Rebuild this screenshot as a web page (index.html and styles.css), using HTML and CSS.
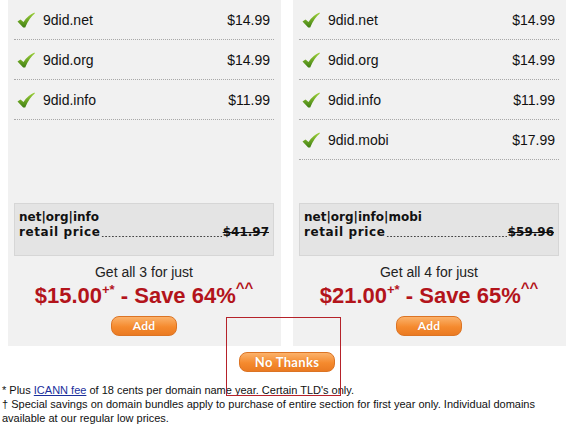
FILE: index.html
```html
<!DOCTYPE html>
<html>
<head>
<meta charset="utf-8">
<link rel="stylesheet" href="styles.css">
</head>
<body>
<div class="page">
  <div class="panels">
    <section class="panel">
      <ul class="rows">
        <li class="row"><svg class="check" viewBox="0 0 18 16"><defs><linearGradient id="g1" x1="0" y1="0" x2="0" y2="1"><stop offset="0" stop-color="#9ed13a"/><stop offset="1" stop-color="#3f7f12"/></linearGradient></defs><path d="M0.5 9.5 L3.5 7.5 L6.5 10 Q10.5 3.5 17.5 0.5 L17.8 1.5 Q12 6 8.2 15.5 L6.2 15.5 Z" fill="url(#g1)"/></svg><span class="name">9did.net</span><span class="price">$14.99</span></li>
        <li class="row"><svg class="check" viewBox="0 0 18 16"><path d="M0.5 9.5 L3.5 7.5 L6.5 10 Q10.5 3.5 17.5 0.5 L17.8 1.5 Q12 6 8.2 15.5 L6.2 15.5 Z" fill="url(#g1)"/></svg><span class="name">9did.org</span><span class="price">$14.99</span></li>
        <li class="row"><svg class="check" viewBox="0 0 18 16"><path d="M0.5 9.5 L3.5 7.5 L6.5 10 Q10.5 3.5 17.5 0.5 L17.8 1.5 Q12 6 8.2 15.5 L6.2 15.5 Z" fill="url(#g1)"/></svg><span class="name">9did.info</span><span class="price">$11.99</span></li>
      </ul>
      <div class="retail">
        <div class="tlds">net|org|info</div>
        <div class="retail-line"><span class="label">retail price</span><span class="leader"></span><s>$41.97</s></div>
      </div>
      <p class="get">Get all 3 for just</p>
      <p class="deal">$15.00<sup>+*</sup> - Save 64%<sup class="hat">^^</sup></p>
      <button class="btn add">Add</button>
    </section>
    <section class="panel">
      <ul class="rows">
        <li class="row"><svg class="check" viewBox="0 0 18 16"><path d="M0.5 9.5 L3.5 7.5 L6.5 10 Q10.5 3.5 17.5 0.5 L17.8 1.5 Q12 6 8.2 15.5 L6.2 15.5 Z" fill="url(#g1)"/></svg><span class="name">9did.net</span><span class="price">$14.99</span></li>
        <li class="row"><svg class="check" viewBox="0 0 18 16"><path d="M0.5 9.5 L3.5 7.5 L6.5 10 Q10.5 3.5 17.5 0.5 L17.8 1.5 Q12 6 8.2 15.5 L6.2 15.5 Z" fill="url(#g1)"/></svg><span class="name">9did.org</span><span class="price">$14.99</span></li>
        <li class="row"><svg class="check" viewBox="0 0 18 16"><path d="M0.5 9.5 L3.5 7.5 L6.5 10 Q10.5 3.5 17.5 0.5 L17.8 1.5 Q12 6 8.2 15.5 L6.2 15.5 Z" fill="url(#g1)"/></svg><span class="name">9did.info</span><span class="price">$11.99</span></li>
        <li class="row"><svg class="check" viewBox="0 0 18 16"><path d="M0.5 9.5 L3.5 7.5 L6.5 10 Q10.5 3.5 17.5 0.5 L17.8 1.5 Q12 6 8.2 15.5 L6.2 15.5 Z" fill="url(#g1)"/></svg><span class="name">9did.mobi</span><span class="price">$17.99</span></li>
      </ul>
      <div class="retail">
        <div class="tlds">net|org|info|mobi</div>
        <div class="retail-line"><span class="label">retail price</span><span class="leader"></span><s>$59.96</s></div>
      </div>
      <p class="get">Get all 4 for just</p>
      <p class="deal">$21.00<sup>+*</sup> - Save 65%<sup class="hat">^^</sup></p>
      <button class="btn add">Add</button>
    </section>
  </div>
  <div class="skip"><button class="btn no">No Thanks</button></div>
  <div class="notes">
    <p>* Plus <a href="#">ICANN fee</a> of 18 cents per domain name year. Certain TLD's only.</p>
    <p>† Special savings on domain bundles apply to purchase of entire section for first year only. Individual domains available at our regular low prices.</p>
  </div>
</div>
<div class="highlight"></div>
</body>
</html>
```
FILE: styles.css
```css
html, body {
  margin: 0;
  padding: 0;
  background: #fff;
  overflow: hidden;
}
body {
  width: 566px;
  height: 424px;
  position: relative;
  font-family: "Liberation Sans", Arial, sans-serif;
  color: #111;
}
.page {
  padding-left: 8px;
  width: 558px;
}
.panels {
  display: grid;
  grid-template-columns: 273px 273px;
  column-gap: 12px;
}
.panel {
  background: #f1f1f1;
  padding: 0 7px 10px 6px;
  display: flex;
  flex-direction: column;
  align-items: stretch;
}
.rows {
  list-style: none;
  margin: 0;
  padding: 0;
  min-height: 203px;
}
.row {
  height: 39px;
  border-bottom: 1px dotted #a8a8a8;
  display: flex;
  align-items: center;
  padding: 0 4px 0 3px;
  font-size: 14px;
}
.check {
  width: 18px;
  height: 16px;
  flex: none;
  margin-top: 1px;
}
.name {
  margin-left: 8px;
  flex: 1;
}
.price {
  flex: none;
}
.retail {
  background: #e4e4e4;
  border: 1px solid #d6d6d6;
  padding: 6px 4px 15px 4px;
  font-family: "DejaVu Sans", Verdana, sans-serif;
  font-weight: bold;
  font-size: 12px;
  line-height: 15px;
  color: #111;
}
.retail-line {
  display: flex;
  align-items: baseline;
  white-space: nowrap;
}
.label {
  letter-spacing: 0.6px;
}
.leader {
  flex: 1;
  align-self: stretch;
  margin: 0 1px;
  background-image: radial-gradient(circle, #444 0.6px, transparent 0.9px);
  background-size: 3.4px 3px;
  background-repeat: repeat-x;
  background-position: 0 10px;
}
.retail-line s {
  flex: none;
}
.get {
  margin: 8px 0 0;
  text-align: center;
  font-size: 14px;
  line-height: 16px;
  color: #222;
}
.deal {
  margin: 3px 0 0;
  text-align: center;
  color: #b3141b;
  font-weight: bold;
  font-size: 22px;
  line-height: 26px;
  white-space: nowrap;
}
.deal sup {
  font-size: 13px;
  line-height: 0;
  vertical-align: 9px;
}
.deal sup.hat {
  font-size: 15px;
  vertical-align: 10px;
}
.btn {
  font-family: Lato, "Open Sans", sans-serif;
  font-weight: bold;
  font-size: 12px;
  color: #fff;
  border: 1px solid #dc7424;
  border-radius: 8px;
  background: linear-gradient(#fbb26b, #f58a2e 55%, #ea7a22);
  height: 20px;
  padding: 0;
  line-height: 18px;
  letter-spacing: 0.3px;
  text-shadow: 0 0 1px rgba(180,80,0,0.4);
  cursor: pointer;
}
.add {
  align-self: center;
  width: 66px;
  margin-top: 7px;
}
.skip {
  display: flex;
  justify-content: center;
  padding-top: 6px;
}
.no {
  width: 96px;
  font-size: 13px;
}
.notes {
  margin: 11px 0 0 -6px;
  font-size: 11px;
  line-height: 14px;
  color: #111;
}
.notes p {
  margin: 0;
}
.notes a {
  color: #1a2f9c;
}
.highlight {
  position: absolute;
  left: 226px;
  top: 317px;
  width: 113px;
  height: 77px;
  border: 1px solid #b5222a;
  pointer-events: none;
}
```
